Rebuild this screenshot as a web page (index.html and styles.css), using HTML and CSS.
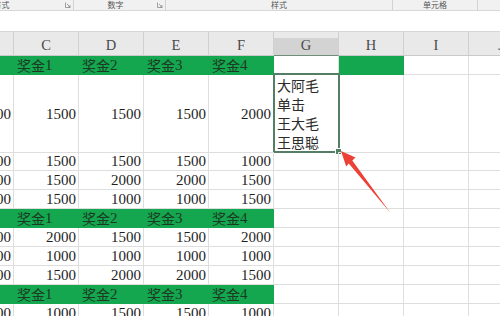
FILE: index.html
```html
<!DOCTYPE html>
<html lang="zh">
<head>
<meta charset="utf-8">
<link rel="stylesheet" href="styles.css">
</head>
<body>
<div class="page">
  <div class="ribbon">
    <div class="grp grp-align"><span class="lbl">对齐方式</span><svg class="launch" viewBox="0 0 6 6"><path d="M0.5 0.5v5h5M2 2l3 3M5 3.2V5H3.2"/></svg></div>
    <div class="grp grp-num"><span class="lbl">数字</span><svg class="launch" viewBox="0 0 6 6"><path d="M0.5 0.5v5h5M2 2l3 3M5 3.2V5H3.2"/></svg></div>
    <div class="grp grp-style"><span class="lbl">样式</span></div>
    <div class="grp grp-cell"><span class="lbl">单元格</span></div>
    <div class="grp grp-last"></div>
  </div>
  <div class="formula"></div>
  <div class="sheet">
    <div class="row head">
      <div class="h">B</div><div class="h">C</div><div class="h">D</div><div class="h">E</div><div class="h">F</div><div class="h sel">G</div><div class="h">H</div><div class="h">I</div><div class="h">J</div>
    </div>
    <div class="row">
      <div class="c g"></div><div class="c g">奖金<span class="d">1</span></div><div class="c g">奖金<span class="d">2</span></div><div class="c g">奖金<span class="d">3</span></div><div class="c g">奖金<span class="d">4</span></div><div class="c"></div><div class="c g"></div><div class="c"></div><div class="c"></div>
    </div>
    <div class="row tall">
      <div class="c n">1500</div><div class="c n">1500</div><div class="c n">1500</div><div class="c n">1500</div><div class="c n">2000</div>
      <div class="c list"><span>大阿毛</span><span>单击</span><span>王大毛</span><span>王思聪</span><div class="selbox"><div class="handle"></div></div></div>
      <div class="c"></div><div class="c"></div><div class="c"></div>
    </div>
    <div class="row">
      <div class="c n">1500</div><div class="c n">1500</div><div class="c n">1500</div><div class="c n">1500</div><div class="c n">1000</div><div class="c"></div><div class="c"></div><div class="c"></div><div class="c"></div>
    </div>
    <div class="row">
      <div class="c n">1000</div><div class="c n">1500</div><div class="c n">2000</div><div class="c n">2000</div><div class="c n">1500</div><div class="c"></div><div class="c"></div><div class="c"></div><div class="c"></div>
    </div>
    <div class="row">
      <div class="c n">1000</div><div class="c n">1500</div><div class="c n">1000</div><div class="c n">1000</div><div class="c n">1500</div><div class="c"></div><div class="c"></div><div class="c"></div><div class="c"></div>
    </div>
    <div class="row">
      <div class="c g"></div><div class="c g">奖金<span class="d">1</span></div><div class="c g">奖金<span class="d">2</span></div><div class="c g">奖金<span class="d">3</span></div><div class="c g">奖金<span class="d">4</span></div><div class="c"></div><div class="c"></div><div class="c"></div><div class="c"></div>
    </div>
    <div class="row">
      <div class="c n">2000</div><div class="c n">2000</div><div class="c n">1500</div><div class="c n">1500</div><div class="c n">2000</div><div class="c"></div><div class="c"></div><div class="c"></div><div class="c"></div>
    </div>
    <div class="row">
      <div class="c n">1000</div><div class="c n">1000</div><div class="c n">1000</div><div class="c n">1000</div><div class="c n">1000</div><div class="c"></div><div class="c"></div><div class="c"></div><div class="c"></div>
    </div>
    <div class="row">
      <div class="c n">1000</div><div class="c n">1500</div><div class="c n">2000</div><div class="c n">2000</div><div class="c n">1500</div><div class="c"></div><div class="c"></div><div class="c"></div><div class="c"></div>
    </div>
    <div class="row">
      <div class="c g"></div><div class="c g">奖金<span class="d">1</span></div><div class="c g">奖金<span class="d">2</span></div><div class="c g">奖金<span class="d">3</span></div><div class="c g">奖金<span class="d">4</span></div><div class="c"></div><div class="c"></div><div class="c"></div><div class="c"></div>
    </div>
    <div class="row">
      <div class="c n">1000</div><div class="c n">1000</div><div class="c n">1500</div><div class="c n">1500</div><div class="c n">1000</div><div class="c"></div><div class="c"></div><div class="c"></div><div class="c"></div>
    </div>
  </div>
  <svg class="arrow" viewBox="0 0 500 316" width="500" height="316">
    <polygon points="341,151 355.5,157.5 352.3,160.6 390.5,213 348.8,163.4 346.2,166.5"/>
  </svg>
</div>
</body>
</html>
```
FILE: styles.css
```css
html, body {
  margin: 0;
  padding: 0;
  background: #ffffff;
}

.page {
  position: relative;
  width: 500px;
  height: 316px;
  overflow: hidden;
  background: #ffffff;
}

.ribbon {
  display: flex;
  height: 10px;
  background: #f1f1f1;
  border-bottom: 1px solid #d8d8d8;
  font-family: "Noto Sans CJK SC", sans-serif;
  font-size: 8px;
  line-height: 10px;
  color: #555;
}

.grp {
  display: flex;
  align-items: center;
  flex: none;
  box-sizing: border-box;
  border-right: 1px solid #d2d2d2;
  height: 10px;
}

.grp .lbl {
  flex: 1;
  text-align: center;
  white-space: nowrap;
}

.grp .launch {
  width: 6px;
  height: 6px;
  margin: 0 2px 0 0;
  fill: none;
  stroke: #8a8a8a;
  stroke-width: 0.8;
}

.grp-align { width: 152px; margin-left: -78px; }
.grp-num { width: 92px; }
.grp-style { width: 227px; }
.grp-cell { width: 85px; }
.grp-last { width: 60px; border-right: none; }

.formula {
  height: 21px;
  background: #ffffff;
  border-bottom: 1px solid #d6d6d6;
  box-sizing: border-box;
}

.sheet {
  margin-left: -51px;
  color: #1e1e1e;
}

.row {
  display: grid;
  grid-template-columns: repeat(9, 65px);
  height: 19px;
}

.row.tall { height: 77px; }

.row.head {
  height: 24px;
  background: #e9e9e9;
}

.h {
  box-sizing: border-box;
  border-right: 1px solid #d0d0d0;
  border-bottom: 1px solid #c9c9c9;
  display: flex;
  align-items: flex-end;
  justify-content: center;
  padding-bottom: 2px;
  font-family: "Times New Roman", "Liberation Serif", Tinos, serif;
  font-size: 14.5px;
  line-height: 16px;
  color: #4a4a4a;
}

.h.sel {
  background: linear-gradient(#e9e9e9 6px, #d3d3d3 6px);
  border-bottom: 1px solid #6f8f7b;
}

.c {
  position: relative;
  box-sizing: border-box;
  border-right: 1px solid #dedede;
  border-bottom: 1px solid #dedede;
  display: flex;
  align-items: center;
  font-family: "Times New Roman", "Liberation Serif", Tinos, serif;
  font-size: 15px;
  line-height: 18px;
  white-space: nowrap;
}

.c.n {
  justify-content: flex-end;
  padding-right: 2px;
}

.c.g {
  background: #14a74f;
  border-color: #14a74f;
  padding-left: 3px;
  font-family: "Noto Sans CJK SC", sans-serif;
  font-size: 14px;
  color: #1c3a22;
}

.c.g .d {
  font-family: "Times New Roman", "Liberation Serif", Tinos, serif;
  font-size: 15px;
}

.c.list {
  flex-direction: column;
  align-items: flex-start;
  justify-content: flex-start;
  padding: 1px 0 0 3px;
  font-family: "Noto Sans CJK SC", sans-serif;
  font-size: 14px;
  line-height: 19px;
  color: #2a2a2a;
}

.selbox {
  position: absolute;
  left: -1px;
  top: -2px;
  width: 67px;
  height: 80px;
  box-sizing: border-box;
  border: 2px solid #557f65;
}

.handle {
  position: absolute;
  right: -4px;
  bottom: -4px;
  width: 5px;
  height: 5px;
  background: #557f65;
  border: 1px solid #ffffff;
}

.arrow {
  position: absolute;
  left: 0;
  top: 0;
  pointer-events: none;
}

.arrow polygon {
  fill: #ec4137;
}
```
